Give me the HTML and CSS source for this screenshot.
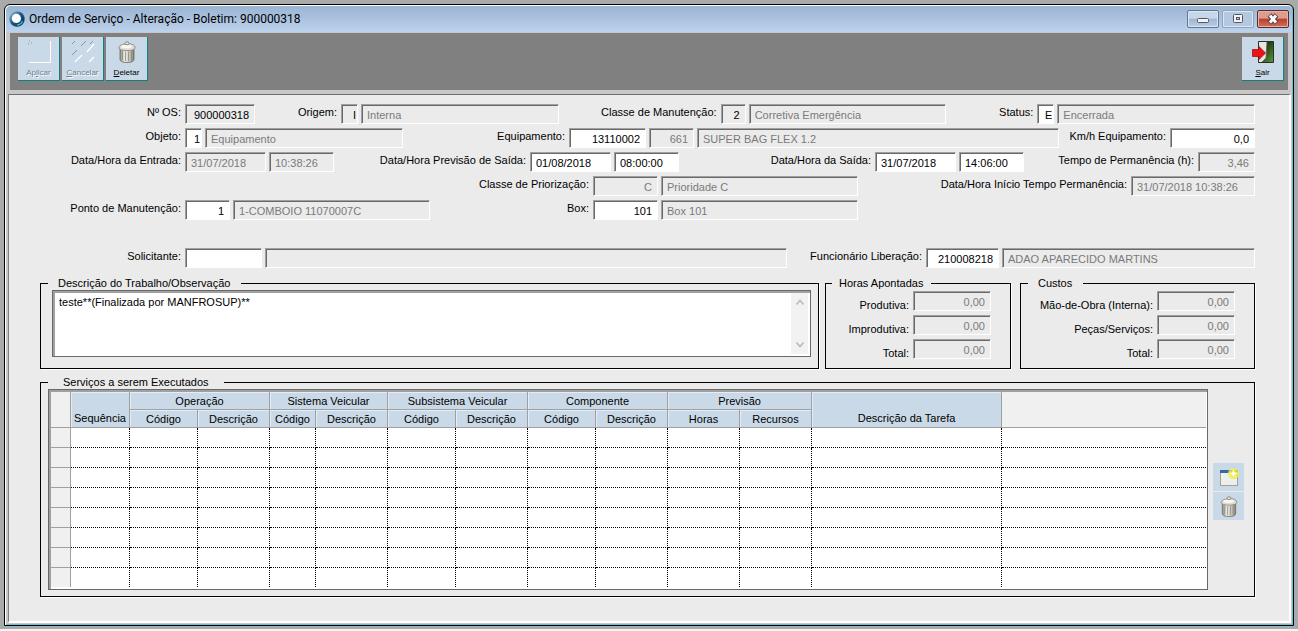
FILE: index.html
```html
<!DOCTYPE html>
<html lang="pt-BR">
<head>
<meta charset="utf-8">
<title>Ordem de Serviço - Alteração - Boletim: 900000318</title>
<link rel="stylesheet" href="styles.css">
</head>
<body>
<svg class="defs" width="0" height="0" aria-hidden="true">
  <defs>
    <linearGradient id="metal" x1="0" x2="1" y1="0" y2="0">
      <stop offset="0" stop-color="#8f8c84"/><stop offset=".35" stop-color="#f1f0ea"/><stop offset=".7" stop-color="#c4c2ba"/><stop offset="1" stop-color="#7d7b73"/>
    </linearGradient>
    <linearGradient id="orb" x1="0" x2="1" y1="0" y2="1">
      <stop offset="0" stop-color="#9fd0e4"/><stop offset=".45" stop-color="#1d5d86"/><stop offset="1" stop-color="#0a1f48"/>
    </linearGradient>
    <linearGradient id="green" x1="0" x2="1" y1="0" y2="1">
      <stop offset=".3" stop-color="#16330f"/><stop offset="1" stop-color="#5d9a3c"/>
    </linearGradient>
    <symbol id="trash" viewBox="0 0 18 22">
      <path d="M2 6V18.500Q2.500 21.500 9 21.500T16 18.500V6Z" fill="url(#metal)" stroke="#6d6a60" stroke-width=".8"/>
      <path d="M4.500 10v9M7.500 10.500v9.500M10.500 10.500v9.500M13.500 10v9" stroke="#8d8a7f" stroke-width=".8"/>
      <path d="M.8 7Q1 3.300 9 2.800T17.200 7Q16 9.600 9 9.600T.8 7Z" fill="#dedcd4" stroke="#85827a" stroke-width=".8"/>
      <ellipse cx="8.500" cy="5.500" rx="5.500" ry="1.800" fill="#f8f7f2"/>
      <ellipse cx="9" cy="2.300" rx="2" ry="1.500" fill="#e5e2d8" stroke="#6d6a60" stroke-width=".7"/>
    </symbol>
  </defs>
</svg>
<main class="window">
  <header class="titlebar">
    <svg class="app-icon" viewBox="0 0 16 16" aria-hidden="true">
      <circle cx="8" cy="8" r="7.700" fill="url(#orb)"/><circle cx="7.400" cy="7.400" r="4.600" fill="#fff"/>
      <path d="M8 14a6 6 0 0 0 5.500-4" fill="none" stroke="#35b5c8" stroke-width="1.500"/>
    </svg>
    <h1 class="title">Ordem de Serviço - Alteração - Boletim: 900000318</h1>
    <div class="window-controls">
      <button class="win-btn" type="button" aria-label="Minimizar"><svg viewBox="0 0 30 16"><rect x="9.500" y="7.500" width="11" height="4" rx="1" fill="#f4f4f4" stroke="#535666"/></svg></button>
      <button class="win-btn faded" type="button" aria-label="Maximizar"><svg viewBox="0 0 30 16"><rect x="10.500" y="3.500" width="9" height="8" rx="1" fill="#f4f4f4" stroke="#535666"/><rect x="13.500" y="6.500" width="3" height="2" fill="#b8cce2" stroke="#535666"/></svg></button>
      <button class="win-btn close" type="button" aria-label="Fechar"><svg viewBox="0 0 30 16"><path d="M11.500 4l7 8M18.500 4l-7 8" stroke="#5b4450" stroke-width="5"/><path d="M12 4.500l6 7M18 4.500l-6 7" stroke="#fff" stroke-width="2.800"/></svg></button>
    </div>
  </header>
  <nav class="toolbar">
    <button class="tool off" type="button"><svg viewBox="0 0 26 26"><path d="M24.500 2v21.500H3" fill="none" stroke="#fff"/><path d="M3 2h1M5 4h1M2 5h1" stroke="#8595a5"/></svg><span>Ap<u>l</u>icar</span></button>
    <button class="tool off" type="button"><svg viewBox="0 0 26 26"><g fill="none" stroke="#8595a5"><path d="M2 5l3-3M11 7l5-5M2 16l5-5M20 5l3-3"/></g><g fill="none" stroke="#fff" stroke-width="1.300"><path d="M17 13l7-8M5 23l7-7M19 23l5-5"/></g></svg><span><u>C</u>ancelar</span></button>
    <button class="tool" type="button"><svg viewBox="0 0 26 26"><use href="#trash" x="4" y="2" width="18" height="22"/></svg><span><u>D</u>eletar</span></button>
    <button class="tool exit" type="button"><svg viewBox="0 0 26 26"><path d="M8.500 2.500h15v21h-15z" fill="url(#green)" stroke="#273022"/><path d="M9 3h8l-1 16-4 4H9z" fill="#e6e5e0"/><path d="M17 3l-1 16-4 4" fill="none" stroke="#5c5c55" stroke-width=".8"/><path d="M2.500 10.500H9V7.500l6.500 6.500L9 20.500v-3H2.500z" fill="#f01018" stroke="#9c1015" stroke-width=".8"/></svg><span><u>S</u>air</span></button>
  </nav>
  <form class="sheet">
    <section class="rows">
      <div class="row row-order">
        <label for="os">Nº OS:</label><input id="os" class="num" value="900000318" readonly>
        <label for="origem">Origem:</label><input id="origem" class="num tight" value="I" readonly><input class="ro" aria-label="Origem, descrição" value="Interna" readonly>
        <label for="classe">Classe de Manutenção:</label><input id="classe" class="num" value="2" readonly><input class="ro" aria-label="Classe, descrição" value="Corretiva Emergência" readonly>
        <label for="status">Status:</label><input id="status" class="num tight edit" value="E"><input class="ro" aria-label="Status, descrição" value="Encerrada" readonly>
      </div>
      <div class="row row-object">
        <label for="objeto">Objeto:</label><input id="objeto" class="num tight edit" value="1"><input class="ro" aria-label="Objeto, descrição" value="Equipamento" readonly>
        <label for="equip">Equipamento:</label><input id="equip" class="num edit" value="13110002"><input class="ro num" aria-label="Modelo" value="661" readonly><input class="ro" aria-label="Equipamento, descrição" value="SUPER BAG FLEX 1.2" readonly>
        <label for="km">Km/h Equipamento:</label><input id="km" class="num edit" value="0,0">
      </div>
      <div class="row row-dates">
        <label for="entrada">Data/Hora da Entrada:</label><input id="entrada" class="ro" value="31/07/2018" readonly><input class="ro" aria-label="Hora da entrada" value="10:38:26" readonly>
        <label for="previsao">Data/Hora Previsão de Saída:</label><input id="previsao" class="edit" value="01/08/2018"><input class="edit" aria-label="Hora prevista" value="08:00:00">
        <label for="saida">Data/Hora da Saída:</label><input id="saida" class="edit" value="31/07/2018"><input class="edit" aria-label="Hora da saída" value="14:06:00">
        <label for="tempo">Tempo de Permanência (h):</label><input id="tempo" class="ro num" value="3,46" readonly>
      </div>
      <div class="row row-priority">
        <label for="prioridade">Classe de Priorização:</label><input id="prioridade" class="ro num" value="C" readonly><input class="ro" aria-label="Priorização, descrição" value="Prioridade C" readonly>
        <label for="inicio">Data/Hora Início Tempo Permanência:</label><input id="inicio" class="ro" value="31/07/2018 10:38:26" readonly>
      </div>
      <div class="row row-place">
        <label for="ponto">Ponto de Manutenção:</label><input id="ponto" class="num edit" value="1"><input class="ro" aria-label="Ponto, descrição" value="1-COMBOIO 11070007C" readonly>
        <label for="box">Box:</label><input id="box" class="num edit" value="101"><input class="ro" aria-label="Box, descrição" value="Box 101" readonly>
      </div>
      <div class="row row-people">
        <label for="solicitante">Solicitante:</label><input id="solicitante" class="edit" value=""><input class="ro" aria-label="Nome do solicitante" value="" readonly>
        <label for="func">Funcionário Liberação:</label><input id="func" class="num edit" value="210008218"><input class="ro" aria-label="Nome do funcionário" value="ADAO APARECIDO MARTINS" readonly>
      </div>
    </section>
    <section class="panels">
      <fieldset class="panel notes">
        <legend>Descrição do Trabalho/Observação</legend>
        <div class="memo">
          <textarea aria-label="Descrição do Trabalho/Observação">teste**(Finalizada por MANFROSUP)**</textarea>
          <div class="scroll" aria-hidden="true">
            <svg viewBox="0 0 10 8"><path d="M1.500 6.500L5 2.500l3.500 4" fill="none" stroke="#b9b9b9" stroke-width="1.600"/></svg>
            <svg viewBox="0 0 10 8"><path d="M1.500 1.500L5 5.500l3.500-4" fill="none" stroke="#b9b9b9" stroke-width="1.600"/></svg>
          </div>
        </div>
      </fieldset>
      <fieldset class="panel sums hours">
        <legend>Horas Apontadas</legend>
        <div class="sum"><label for="prod">Produtiva:</label><input id="prod" class="ro num" value="0,00" readonly></div>
        <div class="sum"><label for="improd">Improdutiva:</label><input id="improd" class="ro num" value="0,00" readonly></div>
        <div class="sum"><label for="htotal">Total:</label><input id="htotal" class="ro num" value="0,00" readonly></div>
      </fieldset>
      <fieldset class="panel sums costs">
        <legend>Custos</legend>
        <div class="sum"><label for="mao">Mão-de-Obra (Interna):</label><input id="mao" class="ro num" value="0,00" readonly></div>
        <div class="sum"><label for="pecas">Peças/Serviços:</label><input id="pecas" class="ro num" value="0,00" readonly></div>
        <div class="sum"><label for="ctotal">Total:</label><input id="ctotal" class="ro num" value="0,00" readonly></div>
      </fieldset>
    </section>
    <fieldset class="panel services">
      <legend>Serviços a serem Executados</legend>
      <div class="services-body">
        <div class="grid-frame">
          <table>
            <colgroup><col class="w20"><col class="w59"><col class="w68"><col class="w72"><col class="w46"><col class="w72"><col class="w68"><col class="w72"><col class="w68"><col class="w72"><col class="w72"><col class="w72"><col class="w190"><col></colgroup>
            <thead>
              <tr><td class="blank" rowspan="2"></td><th class="low" rowspan="2">Sequência</th><th colspan="2">Operação</th><th colspan="2">Sistema Veicular</th><th colspan="2">Subsistema Veicular</th><th colspan="2">Componente</th><th colspan="2">Previsão</th><th class="low" rowspan="2">Descrição da Tarefa</th><td class="blank last" rowspan="2"></td></tr>
              <tr><th>Código</th><th>Descrição</th><th>Código</th><th>Descrição</th><th>Código</th><th>Descrição</th><th>Código</th><th>Descrição</th><th>Horas</th><th>Recursos</th></tr>
            </thead>
            <tbody>
              <tr><td></td><td></td><td></td><td></td><td></td><td></td><td></td><td></td><td></td><td></td><td></td><td></td><td></td><td></td></tr>
              <tr><td></td><td></td><td></td><td></td><td></td><td></td><td></td><td></td><td></td><td></td><td></td><td></td><td></td><td></td></tr>
              <tr><td></td><td></td><td></td><td></td><td></td><td></td><td></td><td></td><td></td><td></td><td></td><td></td><td></td><td></td></tr>
              <tr><td></td><td></td><td></td><td></td><td></td><td></td><td></td><td></td><td></td><td></td><td></td><td></td><td></td><td></td></tr>
              <tr><td></td><td></td><td></td><td></td><td></td><td></td><td></td><td></td><td></td><td></td><td></td><td></td><td></td><td></td></tr>
              <tr><td></td><td></td><td></td><td></td><td></td><td></td><td></td><td></td><td></td><td></td><td></td><td></td><td></td><td></td></tr>
              <tr><td></td><td></td><td></td><td></td><td></td><td></td><td></td><td></td><td></td><td></td><td></td><td></td><td></td><td></td></tr>
              <tr><td></td><td></td><td></td><td></td><td></td><td></td><td></td><td></td><td></td><td></td><td></td><td></td><td></td><td></td></tr>
            </tbody>
          </table>
        </div>
        <div class="side">
          <button class="side-btn" type="button" aria-label="Novo"><svg viewBox="0 0 22 22"><rect x="2.500" y="4.500" width="17" height="15" fill="#eeeeec" stroke="#a2a29c"/><path d="M2 4h18v3H2z" fill="#3566a8"/><circle cx="15.500" cy="7.500" r="5.500" fill="#f3ee50" opacity=".8"/><path d="M15.500 2l1.400 4 4.100 1.500-4.100 1.500-1.400 4-1.500-4-4-1.500 4-1.500z" fill="#fffde0" stroke="#eee63c" stroke-width=".8"/></svg></button>
          <button class="side-btn" type="button" aria-label="Excluir"><svg viewBox="0 0 22 22"><use href="#trash" x="2" y="1" width="18" height="21"/></svg></button>
        </div>
      </div>
    </fieldset>
  </form>
</main>
</body>
</html>
```

FILE: styles.css
```css
* { box-sizing: border-box; }

body {
  margin: 0;
  min-height: 100vh;
  padding: 4px 4px 5px;
  display: flex;
  background: linear-gradient(to top, #f4f4f4 2px, #a9abab 2px);
  font: 11px/14px "Liberation Sans", Arial, sans-serif;
  color: #000;
}

.defs { position: absolute; }

.window {
  flex: 1;
  min-width: 0;
  display: flex;
  flex-direction: column;
  border: 1px solid #000;
  border-radius: 6px 6px 0 0;
  background: #c8c8c8;
  box-shadow: inset 1px 1px 0 #fff, inset -1px -1px 0 #5cc3dc;
  padding: 1px;
}

.titlebar {
  display: flex;
  align-items: center;
  height: 26px;
  padding: 0 3px;
  border-radius: 5px 5px 0 0;
  background: linear-gradient(#9ab4d2, #bdd2ec);
}

.app-icon { width: 16px; height: 16px; }

.title {
  margin: 0 auto 0 4px;
  font: 12px/16px Roboto, sans-serif;
}

.window-controls { display: flex; gap: 3px; }

.win-btn {
  width: 32px;
  height: 18px;
  padding: 0;
  border: 1px solid #5f7590;
  border-radius: 2px;
  background: linear-gradient(#c6d7ea 45%, #9fb6d0 50%, #b9cfe6);
  box-shadow: inset 0 0 0 1px #dbe7f3;
}

.win-btn svg { display: block; width: 30px; height: 16px; }
.win-btn.faded { border-color: #8fa3bb; background: #b4c9e0; }
.win-btn.close {
  border-color: #5c2a2a;
  background: linear-gradient(#dd9c8e 45%, #b8402c 50%, #d2705a);
  box-shadow: inset 0 0 0 1px #e6b3a8;
}

.toolbar {
  display: flex;
  gap: 2px;
  margin: 1px 4px 4px 4px;
  padding: 4px 4px 9px 8px;
  background: #808080;
}

.tool {
  display: flex;
  flex-direction: column;
  align-items: center;
  width: 42px;
  height: 44px;
  padding: 2px 0 0;
  border: 0;
  border-right: 1px solid #0f8080;
  border-bottom: 1px solid #0f8080;
  background: #c9d9e7;
  font: 8px/12px "Liberation Sans", Arial, sans-serif;
  color: #000;
}

.tool svg { width: 26px; height: 26px; margin-bottom: 2px; }
.tool.off { color: #6f7d8b; text-shadow: 1px 1px 0 #fff; }
.tool.exit { margin-left: auto; }

.sheet {
  flex: 1;
  margin: 0 1px 1px 2px;
  padding: 9px 34px 22px 31px;
  border-top: 1px solid #6e6e6e;
  border-left: 1px solid #808080;
  border-right: 2px solid #fff;
  border-bottom: 2px solid #fff;
  background: #ebebeb;
}

.rows { display: grid; row-gap: 4px; margin-bottom: 8px; }

.row { display: grid; column-gap: 3px; height: 20px; }
.row label { line-height: 17px; text-align: right; white-space: nowrap; padding-right: 1px; }
.row-order { grid-template-columns: 142px 70px 80px 17px minmax(0, 1fr) 156px 25px minmax(0, 1fr) 85px 17px minmax(0, 1fr); }
.row-object { grid-template-columns: 142px 17px 198px 160px 77px 45px minmax(0, 1fr) 105px 85px; }
.row-dates { grid-template-columns: 142px 81px 65px 190px 81px 65px minmax(0, 1fr) 81px 65px 168px 57px; }
.row-priority { grid-template-columns: 550px 65px 197px minmax(0, 1fr) 124px; }
.row-place { grid-template-columns: 142px 45px 197px 157px 65px 197px minmax(0, 1fr); }
.row-people { grid-template-columns: 142px 77px minmax(0, 1fr) 133px 73px 253px; margin-top: 24px; }

input {
  width: 100%;
  min-width: 0;
  height: 20px;
  margin: 0;
  padding: 1px 5px 0;
  border: 1px solid;
  border-color: #a0a0a0 #fff #fff #a0a0a0;
  border-radius: 0;
  background: #ebebeb;
  box-shadow: inset 1px 1px 0 #696969;
  font: inherit;
  color: #000;
}

.edit { background: #fff; }
.ro { color: #7a7a7a; }
.num { text-align: right; }
.tight { padding-left: 2px; padding-right: 1px; }

.panels { display: flex; margin-bottom: 6px; }

.panel {
  min-width: 0;
  margin: 0;
  border: 1px solid #000;
  box-shadow: 1px 1px 0 #fff;
  padding: 0;
}

.panel legend { height: 14px; margin-left: 7px; padding: 0 11px 0 10px; }

.notes { flex: 1; margin-right: 6px; padding: 0 7px 11px 11px; }
.notes legend { margin-left: -4px; }

.memo {
  display: flex;
  height: 67px;
  border: 1px solid #696969;
  background: #fff;
  box-shadow: inset 2px 2px 0 #a0a0a0;
  padding: 2px;
}

.memo textarea {
  flex: 1;
  padding: 2px 4px;
  border: 0;
  resize: none;
  overflow: hidden;
  background: #fff;
  font: inherit;
  color: #000;
}

.scroll {
  display: flex;
  flex-direction: column;
  justify-content: space-between;
  align-items: center;
  width: 17px;
  padding: 5px 0;
  background: #f2f2f2;
}

.scroll svg { width: 10px; height: 8px; }

.sums { padding-top: 1px; }
.sum { display: grid; grid-template-columns: minmax(0, 1fr) 78px; column-gap: 4px; margin-bottom: 4px; }
.sum label { padding-top: 9px; line-height: 11px; text-align: right; white-space: nowrap; }
.hours { width: 186px; margin-right: 9px; padding-right: 19px; }
.hours legend { margin-left: 6px; padding: 0 8px 0 7px; }
.costs { width: 235px; padding-right: 19px; }

.services { padding: 0 10px 6px 7px; }
.services legend { margin-left: 0; padding: 0 15px; }
.services-body { display: flex; gap: 5px; }

.grid-frame {
  flex: 1;
  min-width: 0;
  padding: 2px 1px 2px 2px;
  border: 1px solid #696969;
  background: #fff;
  box-shadow: inset 2px 2px 0 #a0a0a0;
}

table { width: 100%; table-layout: fixed; border-collapse: separate; border-spacing: 0; }
.w20 { width: 20px; }
.w46 { width: 46px; }
.w59 { width: 59px; }
.w68 { width: 68px; }
.w72 { width: 72px; }
.w190 { width: 190px; }

th, td { padding: 0; }

th {
  height: 18px;
  border-right: 1px solid #a0a0a0;
  border-bottom: 1px solid #a0a0a0;
  background: #c9d9e7;
  box-shadow: inset 1px 1px 0 #e4edf5;
  font-weight: normal;
  line-height: 14px;
  white-space: nowrap;
}

th.low { vertical-align: bottom; padding-bottom: 2px; }

thead .blank { border-right: 1px solid #a0a0a0; border-bottom: 1px solid #a0a0a0; background: #f0f0f0; }
thead .last { border-right: 0; }

tbody td { height: 20px; border-right: 1px dotted #000; border-bottom: 1px dotted #000; }
tbody td:first-child { border-right: 1px solid #a0a0a0; border-bottom: 1px solid #a0a0a0; background: #f0f0f0; }
tbody td:last-child { border-right: 0; }
tbody tr:last-child td { height: 19px; border-bottom: 0; }

.side { display: flex; flex-direction: column; gap: 1px; padding-top: 74px; }

.side-btn {
  width: 31px;
  height: 28px;
  padding: 3px 0;
  border: 0;
  background: #c9d9e7;
}

.side-btn svg { display: block; width: 22px; height: 22px; margin: 0 auto; }
```
